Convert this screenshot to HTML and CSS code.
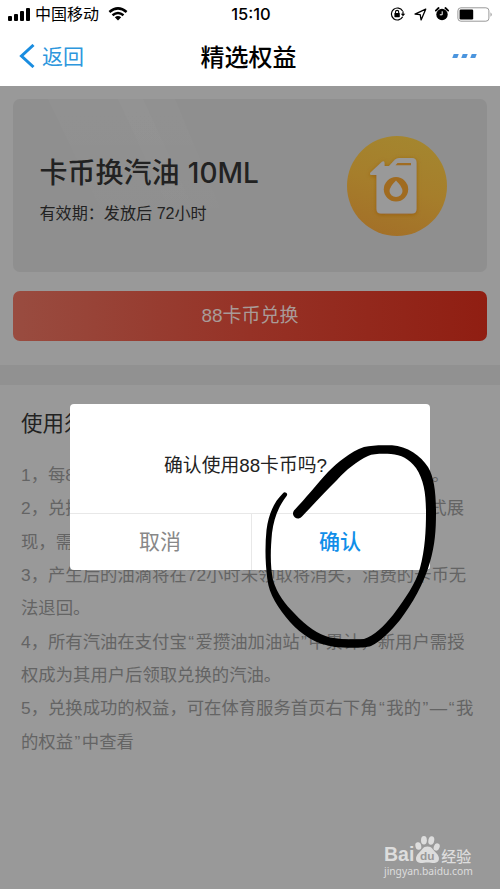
FILE: index.html
```html
<!DOCTYPE html>
<html lang="zh-CN">
<head>
<meta charset="utf-8">
<title>精选权益</title>
<link rel="stylesheet" href="styles.css">
</head>
<body>
<header class="top">
  <div class="status">
    <div class="status-left">
      <svg class="signal" width="23" height="14" viewBox="0 0 23 14"><rect x="0" y="9" width="4" height="5" rx="1"/><rect x="6" y="7" width="4" height="7" rx="1"/><rect x="12" y="4" width="4" height="10" rx="1"/><rect x="18" y="1" width="4" height="13" rx="1"/></svg>
      <span class="carrier">中国移动</span>
      <svg class="wifi" width="20" height="14" viewBox="0 0 20 14" fill="none" stroke="#000" stroke-width="2.5"><path d="M1.4 5Q10-2.2 18.6 5M4.5 8.2Q10 3.8 15.5 8.2"/><path d="M10 13.5 6.8 10.3Q10 7.8 13.2 10.3Z" fill="#000" stroke="none"/></svg>
    </div>
    <span class="time">15:10</span>
    <div class="status-right">
      <svg width="16" height="14" viewBox="0 0 16 14" fill="none" stroke="#000"><path d="M12.6 4A6 6 0 1 0 12.7 9.8" stroke-width="1.2"/><path d="M13 4.2V7.5" stroke-width="1.2"/><path d="M10.7 6.8H15.3L13 9.3Z" fill="#000" stroke="none"/><path d="M5.5 6.4V5a1.6 1.6 0 0 1 3.2 0v1.4" stroke-width="1.1"/><rect x="4.4" y="6" width="5.4" height="4.2" rx=".6" fill="#000" stroke="none"/></svg>
      <svg width="13" height="13" viewBox="0 0 13 13" fill="none" stroke="#000" stroke-width="1.3" stroke-linejoin="round"><path d="M11.7 1.2 1 6.1 6.2 6.7 7.1 11.9Z"/></svg>
      <svg width="14" height="14" viewBox="0 0 14 14"><circle cx="7" cy="7.5" r="5.7"/><path d="M.8 3.6 3.6 1M13.2 3.6 10.4 1" stroke="#000" stroke-width="1.8" stroke-linecap="round"/><path d="M7.2 4.3V7.8H4.8" fill="none" stroke="#fff" stroke-width="1"/></svg>
      <svg width="36" height="15" viewBox="0 0 36 15"><rect x=".9" y=".8" width="31" height="13.4" rx="3" fill="none" stroke="#999"/><rect x="2.6" y="2.6" width="13.6" height="9.8" rx="1.2"/><path d="M33.5 5.2Q36 7.5 33.5 9.8Z" fill="#999"/></svg>
    </div>
  </div>
  <nav class="nav">
    <div class="back">
      <svg width="17" height="24" viewBox="0 0 17 24" fill="none" stroke="#1a8de0" stroke-width="3"><path d="M14.5 1 2.5 12 14.5 23"/></svg>
      <span>返回</span>
    </div>
    <h1 class="title">精选权益</h1>
    <div class="more"><i></i><i></i><i></i></div>
  </nav>
</header>
<main class="content">
  <section class="card">
    <svg class="shine" width="260" height="173" viewBox="0 0 260 173"><defs><linearGradient id="s" x1="0" y1="0" x2="0" y2="1"><stop offset="0" stop-color="#fff" stop-opacity=".02"/><stop offset="1" stop-color="#fff" stop-opacity="0"/></linearGradient></defs><path d="M35 0H162L220 140H102Z" fill="url(#s)"/><path d="M105 0h25l60 130h-25Z" fill="url(#s)"/></svg>
    <div class="card-text">
      <h2>卡币换汽油 <span class="amount">10ML</span></h2>
      <p>有效期：发放后 72小时</p>
    </div>
    <svg class="oil" width="100" height="100" viewBox="0 0 100 100">
      <defs><linearGradient id="g" x1=".65" y1="0" x2=".35" y2="1"><stop offset="0" stop-color="#a4862f"/><stop offset=".5" stop-color="#a67e2b"/><stop offset="1" stop-color="#a37028"/></linearGradient><filter id="glow" x="-30%" y="-30%" width="160%" height="160%"><feDropShadow dx="0" dy="1" stdDeviation="2" flood-color="#92580f" flood-opacity=".8"/></filter></defs>
      <circle cx="50" cy="50" r="50" fill="url(#g)"/>
      <path filter="url(#glow)" fill="#999" d="M23.5 36.5 35 25.7Q37.5 24.4 37.5 27V30H42L48 23.5Q49.7 22 52 22H65Q69.5 22 69.5 26.5V73Q69.5 77.5 65 77.5H34Q29.5 77.5 29.5 73V39H24.5Q22 38.6 23.5 36.5Z"/>
      <path d="M50.5 27H64V29.3H48.5Z" fill="#a06c22"/>
      <circle cx="49" cy="53.3" r="12.2" fill="#a06b20"/>
      <path d="M49 44.5Q55.5 51 55.5 55A6.5 6 0 0 1 42.5 55Q42.5 51 49 44.5Z" fill="#999"/>
    </svg>
  </section>
  <div class="redeem">88卡币兑换</div>
  <div class="band"></div>
  <section class="notes">
    <h3>使用须知</h3>
    <p class="split one"><span>1，每8</span><span>。</span></p>
    <p class="split two"><span>2，兑换</span><span>式展</span></p>
    <p>现，需</p>
    <p>3，产生后的油滴将在72小时未领取将消失，消费的卡币无</p>
    <p>法退回。</p>
    <p>4，所有汽油在支付宝<span class="q">“</span>爱攒油加油站<span class="q">”</span>中累计，新用户需授</p>
    <p>权成为其用户后领取兑换的汽油。</p>
    <p>5，兑换成功的权益，可在体育服务首页右下角<span class="q">“</span>我的<span class="q">”</span>—<span class="q">“</span>我</p>
    <p>的权益<span class="q">”</span>中查看</p>
  </section>
</main>
<div class="dialog">
  <div class="message">确认使用88卡币吗?</div>
  <div class="actions"><span class="cancel">取消</span><span class="ok">确认</span></div>
</div>
<svg class="marker" width="500" height="889" viewBox="0 0 500 889">
  <path d="M294 510.5C305 499 317 484 328 472C338 462 350 452 364 447C372 445 382 445 392 445.3C407 446 421 456 428 467C434 477 436 492 436 513C436 530 435 545 430 562C424 584 412 604 400 620C391 631 381 641 371 646C364 648.5 345 648 335 647C315 644 302 635 290 622C278 608 269 594 267.5 580C265 562 265 545 266.5 530C268.5 514 274 502 283 493.3A2.2 2.2 0 0 1 286.6 496C279 506 274 517 272 533C270.5 550 270 565 273 580C277 594 286 605 294 613C307 627 318 634 330 637.5C341 639.5 354 639.5 364 639C374 636 384 626 393 615C405 599 416 583 420 568C425 550 426 530 426 513C426 494 424 480 416 468C409 459 401 454.5 391 454C382 453.7 373 453.7 368 456C357 461 346 470 337 480C326 491 313 505 302 516.5A5 5 0 0 1 294 510.5Z"/>
</svg>
<div class="watermark">
  <div class="brand"><span class="bai">Bai</span>
    <svg width="27" height="29" viewBox="0 0 25 29" preserveAspectRatio="none" fill="#ddd"><ellipse cx="4" cy="11" rx="2.7" ry="3.8" transform="rotate(-12 4 11)"/><ellipse cx="9.2" cy="5.2" rx="2.7" ry="4.3"/><ellipse cx="16" cy="5.5" rx="2.7" ry="4.3" transform="rotate(10 16 5.5)"/><ellipse cx="21" cy="12" rx="2.7" ry="3.8" transform="rotate(18 21 12)"/><path d="M12.5 11.5C17 11.5 17.5 15 20.5 18C24.5 22 24 27.5 19 28C16 28 15 27.5 12.5 27.5C10 27.5 9 28 6 28C1 27.5 .5 22 4.5 18C7.500 15 8 11.5 12.5 11.5Z"/><text x="12.3" y="25.500" text-anchor="middle" class="du">du</text></svg>
    <span class="exp">经验</span></div>
  <div class="url">jingyan.baidu.com</div>
</div>
</body>
</html>
```
FILE: styles.css
```css
* { box-sizing: border-box; }
body {
  margin: 0;
  width: 500px;
  height: 889px;
  overflow: hidden;
  position: relative;
  background: #999;
  font-family: "Liberation Sans", "Noto Sans CJK SC", sans-serif;
}
h1, h2, h3, p { margin: 0; font-weight: 400; }
svg { display: block; flex: none; }
.top { height: 86px; background: #fff; color: #000; }
.status {
  height: 28px;
  display: grid;
  grid-template-columns: 1fr auto 1fr;
  align-items: center;
  padding: 0 7px 0 8px;
}
.status-left { display: flex; align-items: center; }
.carrier { font-size: 16px; line-height: 24px; margin: 0 9px 0 4px; padding-top: 2px; }
.time { font: 500 16.5px/24px Inter, sans-serif; margin-left: 1px; }
.status-right { display: flex; align-items: center; justify-content: flex-end; gap: 8px; }
.nav {
  height: 55px;
  display: grid;
  grid-template-columns: 1fr auto 1fr;
  align-items: center;
  padding: 0 24px 0 19px;
}
.back { display: flex; align-items: center; gap: 6px; color: #2d97dd; font: 400 21px/30px "Noto Sans CJK SC", sans-serif; }
.back span { padding-bottom: 2px; }
.title { font: 500 24px/34px "Noto Sans CJK SC", sans-serif; margin-left: 2px; }
.more { display: flex; justify-content: flex-end; gap: 4px; }
.more i { width: 5px; height: 4px; background: #4b95de; transform: skewX(-20deg); }
.content { padding-top: 13px; }
.card {
  position: relative;
  height: 173px;
  margin: 0 13px;
  padding: 0 40px 0 26.5px;
  border-radius: 7px;
  background: #8f8f8f;
  display: flex;
  justify-content: space-between;
  align-items: center;
}
.shine { position: absolute; left: 0; top: 0; }
.card-text { color: #222; position: relative; padding-top: 5px; }
.card h2 { font: 500 28px/40px "Noto Sans CJK SC", sans-serif; white-space: pre; }
.amount { font: 500 28px/40px Inter, sans-serif; margin-left: 2px; }
.card p { font-size: 16.1px; line-height: 24px; margin-top: 8px; }
.redeem {
  margin: 18.5px 13px 0;
  height: 50.5px;
  border-radius: 7px;
  background: linear-gradient(90deg, #994c40, #963226 50%, #901e12);
  color: #a99b98;
  text-align: center;
  font-size: 19px;
  line-height: 50px;
}
.band { height: 20px; margin-top: 24px; background: #919191; }
.notes { padding: 22px 20px 0 21px; color: #646464; }
.notes h3 { color: #222; font-size: 21.5px; line-height: 34px; margin-bottom: 18px; }
.notes p { font-size: 17.35px; line-height: 33.35px; height: 33.35px; white-space: nowrap; }
.notes .split { display: flex; justify-content: space-between; }
.one { width: 428px; }
.two { width: 443px; }
.q { padding: 0 1.5px; }
.dialog {
  position: absolute;
  left: 70px;
  top: 404px;
  width: 360px;
  height: 166px;
  border-radius: 4px;
  background: #fff;
  display: flex;
  flex-direction: column;
  overflow: hidden;
}
.message {
  height: 109px;
  padding: 48px 9px 0 0;
  text-align: center;
  font-size: 18.8px;
  line-height: 28px;
  color: #222;
}
.actions { flex: 1; display: grid; grid-template-columns: 182px 1fr; border-top: 1px solid #e8e8e8; text-align: center; font: 400 21px/52px "Noto Sans CJK SC", sans-serif; }
.cancel { color: #888; border-right: 1px solid #e8e8e8; padding-right: 1px; }
.ok { color: #108ee9; font-weight: 500; padding-right: 2px; }
.marker { position: absolute; left: 0; top: 0; }
.watermark { position: absolute; left: 384px; top: 835px; color: #ddd; }
.brand { display: flex; align-items: flex-end; height: 29px; }
.bai { font: 700 19.5px/20px "Liberation Sans", sans-serif; }
.du { font: 700 11px "Liberation Sans", sans-serif; fill: #999; }
.exp { font: 500 15px/17px "Noto Sans CJK SC", sans-serif; }
.url { font: 400 10.3px/14px "Noto Sans", sans-serif; letter-spacing: -.02px; }
```
